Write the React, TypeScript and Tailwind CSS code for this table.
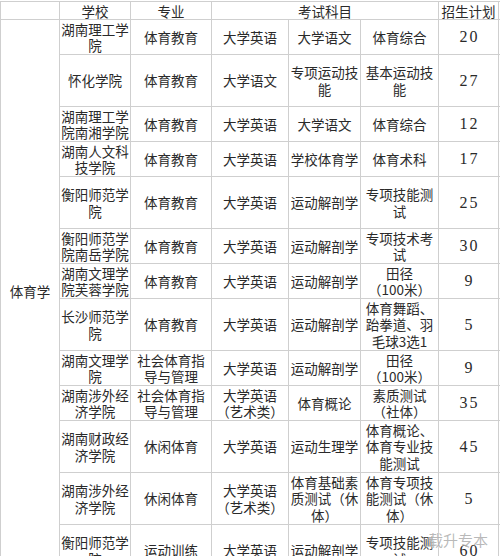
const rows: string[][] = [
  ["湖南理工学\n院", "体育教育", "大学英语", "大学语文", "体育综合", "20"],
  ["怀化学院", "体育教育", "大学语文", "专项运动技\n能", "基本运动技\n能", "27"],
  ["湖南理工学\n院南湘学院", "体育教育", "大学英语", "大学语文", "体育综合", "12"],
  ["湖南人文科\n技学院", "体育教育", "大学英语", "学校体育学", "体育术科", "17"],
  ["衡阳师范学\n院", "体育教育", "大学英语", "运动解剖学", "专项技能测\n试", "25"],
  ["衡阳师范学\n院南岳学院", "体育教育", "大学英语", "运动解剖学", "专项技术考\n试", "30"],
  ["湖南文理学\n院芙蓉学院", "体育教育", "大学英语", "运动解剖学", "田径\n（100米）", "9"],
  ["长沙师范学\n院", "体育教育", "大学英语", "运动解剖学", "体育舞蹈、\n跆拳道、羽\n毛球3选1", "5"],
  ["湖南文理学\n院", "社会体育指\n导与管理", "大学英语", "运动解剖学", "田径\n（100米）", "9"],
  ["湖南涉外经\n济学院", "社会体育指\n导与管理", "大学英语\n（艺术类）", "体育概论", "素质测试\n（社体）", "35"],
  ["湖南财政经\n济学院", "休闲体育", "大学英语", "运动生理学", "体育概论、\n体育专业技\n能测试", "45"],
  ["湖南涉外经\n济学院", "休闲体育", "大学英语\n（艺术类）", "体育基础素\n质测试（休\n体）", "体育专项技\n能测试（休\n体）", "5"],
  ["衡阳师范学\n院", "运动训练", "大学英语", "运动解剖学", "专项技能测\n试", "60"],
];

function Cell({ text, num }: { text: string; num?: boolean }) {
  return (
    <div className="bg-white flex items-center justify-center text-center">
      {num ? (
        <span className="font-['Liberation_Serif',serif] text-[16px] tracking-[2px] pl-[2px]">{text}</span>
      ) : (
        <span className="whitespace-pre leading-[16.5px]">{text}</span>
      )}
    </div>
  );
}

export default function App() {
  return (
    <div className="relative h-[556px] w-[500px] overflow-hidden bg-white font-['Noto_Sans_CJK_SC',sans-serif] text-[13.5px] text-[#2a2a2a]">
      <div className="mt-px grid grid-cols-[58px_70px_80px_76px_71px_77px_59px_60px] grid-rows-[17px_34px_51px_34px_34px_51px_34px_34px_51px_34px_34px_51px_51px_51px] gap-px bg-[#cfcfcf] p-px w-[560px]">
        {/* header */}
        <div className="bg-white" />
        <div className="bg-white flex items-center justify-center leading-[16px]">学校</div>
        <div className="bg-white flex items-center justify-center leading-[16px]">专业</div>
        <div className="col-span-3 bg-white flex items-center justify-center leading-[16px]">考试科目</div>
        <div className="bg-white flex items-center justify-center leading-[16px] whitespace-nowrap">招生计划</div>
        <div className="bg-white flex items-center leading-[16px]">：</div>

        <div className="row-span-13 bg-white flex items-center justify-center pb-[14px]">体育学</div>

        {rows.map((r, i) => (
          <div key={i} className="contents">
            {r.map((t, j) => (
              <Cell key={j} text={t} num={j === 5} />
            ))}
            <div className="bg-white" />
          </div>
        ))}
      </div>

      {/* watermark */}
      <div className="absolute left-[428px] top-[529px] text-[15px] text-[#9a9a9a]/70 [text-shadow:0_0_2px_#fff]">
        载升专本
      </div>
    </div>
  );
}
